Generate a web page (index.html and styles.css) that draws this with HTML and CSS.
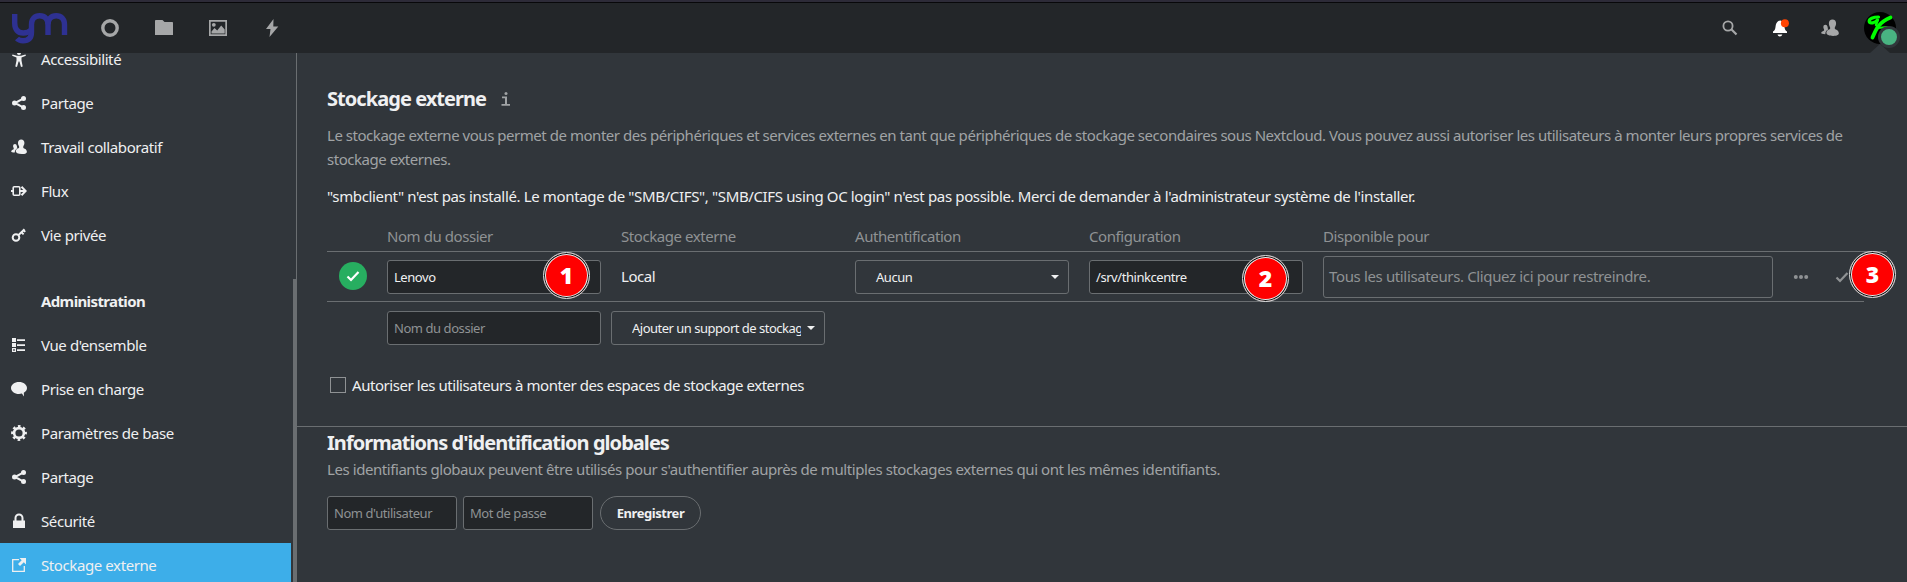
FILE: index.html
```html
<!DOCTYPE html>
<html lang="fr">
<head>
<meta charset="utf-8">
<title>Stockage externe</title>
<link rel="stylesheet" href="styles.css">
</head>
<body>
<svg class="sprite" width="0" height="0">
  <symbol id="share" viewBox="0 0 16 16"><path d="M13 3.200 4 8l9 4.800" fill="none" stroke="currentColor" stroke-width="2"/><circle cx="3.500" cy="8" r="2.500"/><circle cx="12.500" cy="3.500" r="2.500"/><circle cx="12.500" cy="12.500" r="2.500"/></symbol>
  <symbol id="people" viewBox="0 0 16 16"><path d="M10.200.5c-2 0-3.200 1.400-3.200 3.300 0 1.700.5 2.700 1.100 3.500v1.600C5.700 9.600 5 10.600 4.800 12c-.2 1.600 1.800 3 6 3s5.300-1.300 5-2.800c-.3-1.600-1.300-2.500-3.500-3.300V7.300c.6-.8 1.100-1.800 1.100-3.500C13.400 1.900 12.200.5 10.200.5z"/><path d="M4 5C2.800 5 2.100 5.800 2.100 7c0 1 .3 1.500.6 2v1.200C1 11 .2 11.500.2 12.500c0 .7 1.300 1 3.600 1 0-2 1-3.400 2.500-4.200C6 8 6 5 4 5z"/></symbol>
</svg>
<header class="topbar">
  <svg class="logo" viewBox="0 0 58 34" width="58" height="34"><g fill="none" stroke="#2e3192" stroke-width="5.400" stroke-linejoin="round"><path d="M3.700 2V11c0 6.500 3 10 8.500 10 3.500 0 6-1 8-3"/><path d="M6 26.500c1.500 1.700 3.500 2.200 6 2.200 5.500 0 8.500-3 8.500-8.700V12.500c0-5.500 3-8.700 8.200-8.700s8.300 3.200 8.300 8.700V23"/><path d="M37 12.500c0-5.500 3-8.700 8.200-8.700s8.300 3.200 8.300 8.700V23"/></g></svg>
  <nav class="apps">
    <svg viewBox="0 0 18 18"><circle cx="9" cy="9" r="7.200" fill="none" stroke="currentColor" stroke-width="3.400"/></svg>
    <svg viewBox="0 0 18 18"><path d="M0 2c0-.5.400-1 1-1h6.500l2 2H17c.6 0 1 .4 1 1v12H0z"/></svg>
    <svg viewBox="0 0 18 18"><path fill-rule="evenodd" d="M0 1h18v16H0zM1.700 2.700v12.600h14.600V2.700z"/><circle cx="4.800" cy="5.800" r="1.900"/><path d="M2.500 14.500v-2l3-3.500 2.700 2.500 4-5 3.500 4v4z"/></svg>
    <svg viewBox="0 0 18 18"><path d="M10.500 0 3 10h4.500L6.500 18 15.300 7.500h-5z"/></svg>
  </nav>
  <div class="tools">
    <svg viewBox="0 0 16 16"><circle cx="6" cy="6" r="4.600" fill="none" stroke="currentColor" stroke-width="1.800"/><path d="m9.300 9.300 5.200 5.200" stroke="currentColor" stroke-width="2.200"/></svg>
    <svg class="bell" viewBox="0 0 18 18"><path fill="#fff" d="M8.500 1.500C5 2 4 4.500 3.500 8c-.3 2-.8 3.500-2.500 4.500V14h14v-1.500c-1.700-1-2.200-2.500-2.500-4.500L12 3z"/><path d="M5.500 15.500h4.800c-.3 1.200-1.300 2-2.400 2s-2.100-.8-2.400-2z" fill="#fff"/><circle cx="12.900" cy="4.200" r="4" fill="#ff4402"/></svg>
    <svg class="contacts"><use href="#people"/></svg>
    <div class="avatar">
      <svg viewBox="0 0 32 32" width="32" height="32"><circle cx="16" cy="16" r="16" fill="#000"/><g fill="none" stroke="#0f0" stroke-linecap="round"><path d="M14.500 5C9 5 5 7 5.200 9.500c.5 2.500 6 1.500 8.300-1.500" stroke-width="3.200"/><path d="M26.500 5.500C23 7 18 10 15 13.500c-3 3.500-4.500 7.500-6.500 12" stroke-width="3.800"/><path d="M13.500 8.500 12 13" stroke-width="2.500"/><path d="m14 16 9-1" stroke-width="2.200"/></g></svg>
      <span class="status"></span>
    </div>
  </div>
</header>
<div class="layout">
  <aside class="sidebar">
    <ul class="menu">
      <li><svg viewBox="0 0 16 16"><circle cx="8" cy="2" r="2"/><path d="M1.500 3.500 6 4.700h4l4.500-1.200.4 1.300L10.500 6.500v3l1.200 6-1.700.4-1.600-5.400h-.8L6 15.900l-1.700-.4 1.200-6v-3L1.100 4.800z"/></svg>Accessibilité</li>
      <li><svg><use href="#share"/></svg>Partage</li>
      <li><svg><use href="#people"/></svg>Travail collaboratif</li>
      <li><svg viewBox="0 0 16 16"><rect x="2.200" y="3.700" width="6.600" height="8.600" rx="1" fill="none" stroke="currentColor" stroke-width="1.600"/><path d="M0 7h2v2H0zM9 7h5v2H9z"/><path d="m10.500 3.700 4.200 4.300-4.200 4.300" fill="none" stroke="currentColor" stroke-width="2"/></svg>Flux</li>
      <li><svg viewBox="0 0 16 16"><circle cx="5" cy="10.500" r="3.300" fill="none" stroke="currentColor" stroke-width="2"/><path d="m7.300 8.300 6.200-6.100M10.300 5l2.300 2.300M12.400 3l1.800 1.900" stroke="currentColor" stroke-width="1.900"/></svg>Vie privée</li>
    </ul>
    <ul class="menu">
      <li class="caption">Administration</li>
      <li><svg viewBox="0 0 16 16"><path fill-rule="evenodd" d="M1 1h4v4H1zM1 6h4v4H1zM1 11h4v4H1zM2.200 12.200v1.600h1.600v-1.600zM6 2.200h8v1.800H6zM6 7.200h8V9H6zM6 12.200h8V14H6z"/></svg>Vue d'ensemble</li>
      <li><svg viewBox="0 0 16 16"><path d="M8 1C3.500 1 0 3.700 0 7s3.500 6 8 6c1 0 2-.1 2.900-.4L13 15.500l-.2-3.700C14.800 10.700 16 9 16 7c0-3.300-3.500-6-8-6z"/></svg>Prise en charge</li>
      <li><svg viewBox="0 0 16 16"><circle cx="8" cy="8" r="4.900" fill="none" stroke="currentColor" stroke-width="2.600"/><circle cx="8" cy="8" r="6.700" fill="none" stroke="currentColor" stroke-width="2.400" stroke-dasharray="2.630 2.630" stroke-dashoffset="1.300"/></svg>Paramètres de base</li>
      <li><svg><use href="#share"/></svg>Partage</li>
      <li><svg viewBox="0 0 16 16"><path d="M4.500 8V5a3.500 3.500 0 0 1 7 0v3" fill="none" stroke="currentColor" stroke-width="2"/><path d="M2 7.500h12V15H2z"/></svg>Sécurité</li>
      <li class="active"><svg viewBox="0 0 16 16"><path d="M8 2.600H1.700v11.700h11.600V9" fill="none" stroke="currentColor" stroke-width="1.300"/><path d="M8.500 1H15v6.500l-2.200-2.200L9 9 7 7l3.700-3.800z"/></svg>Stockage externe</li>
    </ul>
    <span class="thumb"></span>
  </aside>
  <main class="content">
    <section class="storage">
      <h2>Stockage externe <svg class="info" viewBox="0 0 10 14" width="10" height="14"><circle cx="5" cy="1.500" r="1.500"/><path d="M1 4.500h5V12h3v1.800H.5V12H4V6.300H1z"/></svg></h2>
      <p class="hint">Le stockage externe vous permet de monter des périphériques et services externes en tant que périphériques de stockage secondaires sous Nextcloud. Vous pouvez aussi autoriser les utilisateurs à monter leurs propres services de<br>stockage externes.</p>
      <p class="warning">"smbclient" n'est pas installé. Le montage de "SMB/CIFS", "SMB/CIFS using OC login" n'est pas possible. Merci de demander à l'administrateur système de l'installer.</p>
      <div class="grid head"><span></span><span>Nom du dossier</span><span>Stockage externe</span><span>Authentification</span><span>Configuration</span><span>Disponible pour</span></div>
      <div class="grid row">
        <span class="ok"><svg viewBox="0 0 16 16" width="16" height="16"><path d="m2.500 8.500 3.500 3.500 7.500-8" fill="none" stroke="#fff" stroke-width="2.200"/></svg></span>
        <span class="field">Lenovo<b class="pin">1</b></span>
        <span class="type">Local</span>
        <span class="field select">Aucun</span>
        <span class="field">/srv/thinkcentre<b class="pin pin2">2</b></span>
        <span class="users">Tous les utilisateurs. Cliquez ici pour restreindre.</span>
        <svg class="dots" viewBox="0 0 16 16"><circle cx="2.800" cy="8" r="2"/><circle cx="8" cy="8" r="2"/><circle cx="13.200" cy="8" r="2"/></svg>
        <span class="save"><svg viewBox="0 0 16 16"><path d="m2.500 8.500 3.500 3.500 7.500-8" fill="none" stroke="currentColor" stroke-width="2.200"/></svg><b class="pin pin3">3</b></span>
      </div>
      <div class="grid new"><span></span><span class="field empty">Nom du dossier</span><span class="field select add"><span class="clip">Ajouter un support de stockage</span></span></div>
      <label class="allow"><span class="box"></span>Autoriser les utilisateurs à monter des espaces de stockage externes</label>
    </section>
    <section class="global">
      <h2>Informations d'identification globales</h2>
      <p class="hint">Les identifiants globaux peuvent être utilisés pour s'authentifier auprès de multiples stockages externes qui ont les mêmes identifiants.</p>
      <div class="creds"><span class="field empty">Nom d'utilisateur</span><span class="field empty">Mot de passe</span><button>Enregistrer</button></div>
    </section>
  </main>
</div>
</body>
</html>
```
FILE: styles.css
```css
* { box-sizing: border-box; }
body { margin: 0; height: 582px; overflow: hidden; background: #31363b; color: #eff0f1; font: 15px/24px "Noto Sans", sans-serif; letter-spacing: -.44px; }
svg { fill: currentColor; flex: none; }
.sprite { position: absolute; }
h2, p, ul { margin: 0; padding: 0; }
.topbar { height: 53px; background: #232629; border-top: 2px solid #2d2b38; box-shadow: inset 0 1px #08080a; display: flex; align-items: center; padding-left: 11px; color: #a6a7a8; }
.logo { margin-top: 2px; }
.apps { display: flex; gap: 36px; margin-left: 32px; }
.apps svg { width: 18px; height: 18px; }
.tools { display: flex; align-items: center; margin-left: auto; padding-right: 11px; }
.tools > svg { width: 16px; height: 16px; }
.tools .bell { width: 18px; height: 18px; margin-left: 34px; }
.tools .contacts { width: 18px; height: 18px; margin-left: 31px; }
.avatar { position: relative; height: 32px; width: 32px; margin-left: 25px; }
.avatar::after { content: ""; position: absolute; left: 6px; top: 32px; border: 10px solid transparent; border-top: 0; border-bottom: 9px solid #31363b; }
.status { position: absolute; z-index: 1; left: 14px; top: 14px; width: 22px; height: 22px; border-radius: 50%; border: 3px solid #31363b; background: #49b382; }
.layout { display: flex; height: 529px; }
.sidebar { position: relative; flex: none; width: 297px; border-right: 1px solid #6a6e71; overflow: hidden; }
.thumb { position: absolute; right: 0; top: 226px; width: 3px; height: 303px; background: #6a6e71; }
.menu { list-style: none; width: 291px; letter-spacing: -.4px; }
.menu:first-child { margin-top: -16px; }
.menu + .menu { margin-top: 22px; }
.menu li { height: 44px; display: flex; align-items: center; gap: 14px; padding-left: 11px; }
.menu svg { width: 16px; height: 16px; }
.menu .caption { padding-left: 41px; font-weight: bold; letter-spacing: -.62px; }
.menu .active { background: #3daee9; }
.content { flex: 1; min-width: 0; }
h2 { font-size: 20px; line-height: 24px; font-weight: bold; letter-spacing: -.95px; }
.hint { color: #a0a3a5; letter-spacing: -.465px; }
.storage { height: 374px; padding: 34px 20px 0 30px; border-bottom: 1px solid #6a6e71; }
.info { margin-left: 11px; color: #a0a3a5; }
.storage .hint { margin-top: 12px; white-space: nowrap; }
.warning { margin-top: 13px; letter-spacing: -.355px; }
.grid { display: grid; grid-template-columns: 60px 224px 244px; align-items: center; }
.head { height: 44px; border-bottom: 1px solid #6a6e71; padding-top: 12px; color: #8f9294; }
.head, .row { grid-template-columns: 60px 234px 234px 234px 234px 450px 56px 30px; }
.row { height: 50px; border-bottom: 1px solid #6a6e71; margin-right: 23px; padding-top: 1px; }
.type { margin-top: -2px; }
.field { position: relative; display: flex; align-items: center; width: 214px; height: 34px; border: 1px solid #6a6e71; border-radius: 3px; background: #232629; padding: 0 6px; font-size: 13px; white-space: nowrap; }
.select { background: transparent; padding-left: 20px; }
.select::after { content: ""; position: absolute; right: 9px; top: 14px; border: 4px solid transparent; border-top-color: #eff0f1; border-bottom: 0; }
.empty { color: #8f9294; }
.ok { width: 28px; height: 28px; border-radius: 50%; background: #27ae60; margin: -3px 0 0 12px; display: flex; align-items: center; justify-content: center; }
.users { height: 42px; border: 1px solid #6a6e71; border-radius: 3px; line-height: 38px; padding-left: 5px; color: #8f9294; letter-spacing: -.36px; }
.dots { width: 16px; height: 16px; margin-left: 20px; color: #8f9294; }
.save { position: relative; display: flex; color: #8f9294; }
.save svg { width: 16px; height: 16px; margin-left: 5px; }
.pin { position: absolute; z-index: 2; left: 155px; top: -9px; width: 47px; height: 47px; border-radius: 50%; background: #f00; background-clip: padding-box; border: 1px solid #ddd; box-shadow: inset 0 0 0 1px #111, inset 0 0 0 2px #eee; color: #fff; font: 900 23px/45px "Noto Sans", sans-serif; letter-spacing: 0; text-align: center; }
.pin2 { top: -6px; left: 152px; }
.pin3 { left: 20px; top: -18px; }
.new { height: 50px; padding-top: 1px; }
.clip { width: 169px; overflow: hidden; letter-spacing: -.5px; }
.allow { display: flex; align-items: center; gap: 6px; margin-top: 21px; margin-left: 3px; }
.box { width: 16px; height: 16px; border: 1px solid #8f9294; }
.global { padding: 4px 30px; }
.global .hint { margin-top: 2px; letter-spacing: -.43px; }
.creds { display: flex; align-items: center; margin-top: 15px; }
.creds .field { width: 130px; margin-right: 6px; }
button { height: 34px; width: 101px; border: 1px solid #6a6e71; border-radius: 17px; background: transparent; color: #eff0f1; font: bold 13px "Noto Sans", sans-serif; letter-spacing: -.44px; padding: 0; margin-left: 1px; }
```
